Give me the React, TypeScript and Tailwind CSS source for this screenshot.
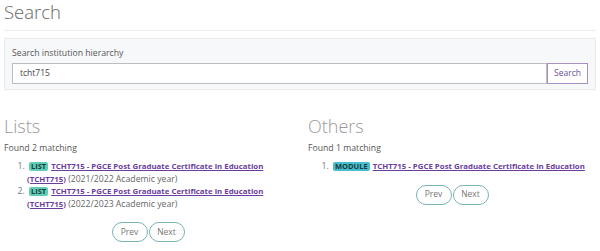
import type { ReactNode } from 'react';

type Hit = { badge: string; badgeClass: string; title: string; extra?: string };

const lists: Hit[] = [
  { badge: 'LIST', badgeClass: 'bg-[#5ecfb6]', title: 'TCHT715 - PGCE Post Graduate Certificate in Education (TCHT715)', extra: '(2021/2022 Academic year)' },
  { badge: 'LIST', badgeClass: 'bg-[#5ecfb6]', title: 'TCHT715 - PGCE Post Graduate Certificate in Education (TCHT715)', extra: '(2022/2023 Academic year)' },
];

const others: Hit[] = [{ badge: 'MODULE', badgeClass: 'bg-[#47bed0]', title: 'TCHT715 - PGCE Post Graduate Certificate in Education' }];

function Pager() {
  return (
    <div className="mt-3 flex justify-center gap-[1px]">
      {['Prev', 'Next'].map((label) => (
        <button key={label} type="button" className="h-[20px] w-[36px] rounded-full border border-[#7ab3b3] bg-white text-[8.5px] text-[#777]">
          {label}
        </button>
      ))}
    </div>
  );
}

function ResultColumn({ title, hits }: { title: string; hits: Hit[] }): ReactNode {
  return (
    <section>
      <h2 className="text-[18px] font-light leading-[22px] text-[#999]">{title}</h2>
      <p className="mt-[5px] text-[8.7px] leading-[12px] text-[#555]">Found {hits.length} matching</p>
      <ol className="mt-[6px] list-decimal pl-[23px] text-[8.7px] leading-[12.5px] text-[#666] marker:text-[#777]">
        {hits.map((hit, index) => (
          <li key={index}>
            <span className={`ml-[2px] mr-[3px] inline-block rounded-[2px] px-[2px] text-[7.5px] font-bold leading-[9px] text-[#1d3b3a] ${hit.badgeClass}`}>{hit.badge}</span>
            <a href="#" className="text-[7.85px] font-bold text-[#6a3d9e] underline">
              {hit.title}
            </a>
            {hit.extra && <span> {hit.extra}</span>}
          </li>
        ))}
      </ol>
      <Pager />
    </section>
  );
}

export default function App() {
  return (
    <div className="min-h-[251px] bg-white px-[4px] text-[#555]" style={{ fontFamily: '"Open Sans", "Noto Sans", sans-serif' }}>
      <h1 className="text-[18.5px] font-light leading-[24px] text-[#666]">Search</h1>
      <hr className="mt-[6px] border-t border-[#eeeeee]" />
      <div className="mt-[7px] border border-[#e8eaee] bg-[#f7f8fa] px-[7px] pb-[5px] pt-[8px]">
        <label className="block text-[8.7px] leading-[12px] text-[#555]">Search institution hierarchy</label>
        <div className="mt-[4px] flex h-[21px]">
          <input readOnly value="tcht715" className="min-w-0 flex-1 border border-[#bdbdbd] bg-white px-[7px] text-[8.5px] text-[#444] outline-none" />
          <button type="button" className="w-[41px] border border-[#a591c6] bg-white text-[8.5px] text-[#6a5296]">
            Search
          </button>
        </div>
      </div>
      <div className="mt-[25px] grid grid-cols-2 gap-4">
        <ResultColumn title="Lists" hits={lists} />
        <ResultColumn title="Others" hits={others} />
      </div>
    </div>
  );
}
